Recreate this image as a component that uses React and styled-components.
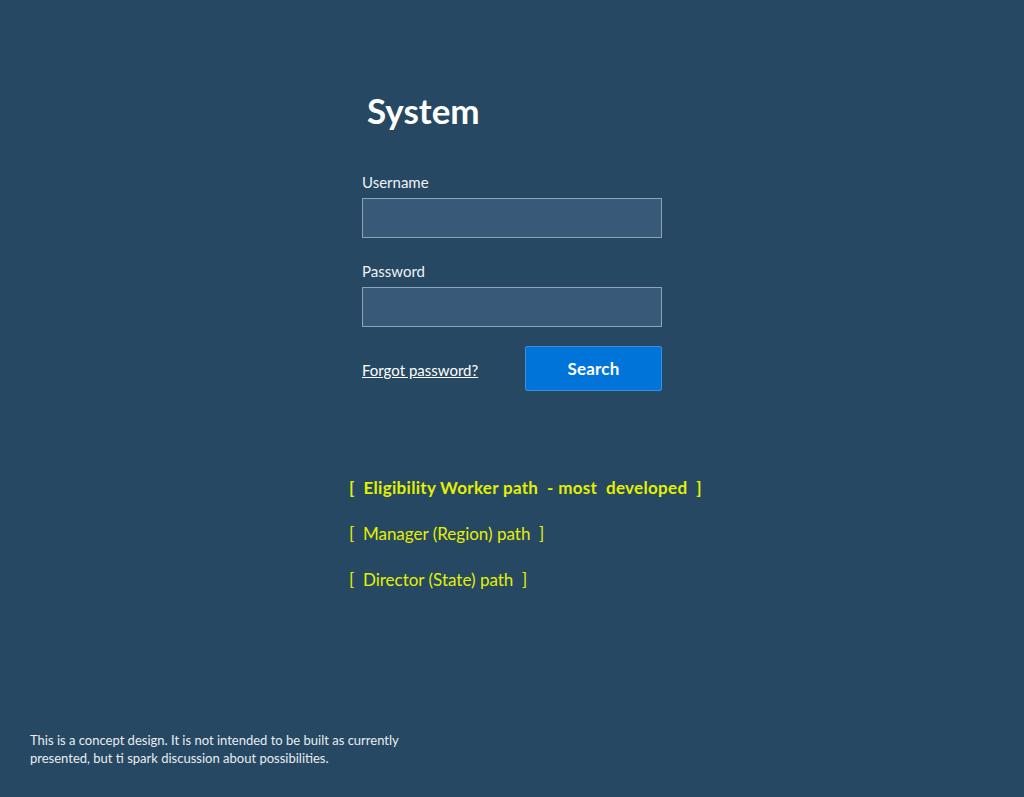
import React from "react";
import styled, { createGlobalStyle } from "styled-components";

const GlobalStyle = createGlobalStyle`
  html, body {
    margin: 0;
    padding: 0;
    background: #264863;
    font-family: "Lato", "Open Sans", sans-serif;
  }
`;

const Page = styled.div`
  width: 1024px;
  height: 797px;
  background: #264863;
  display: flex;
  flex-direction: column;
  box-sizing: border-box;
  padding-top: 88px;
`;

const Column = styled.div`
  width: 326px;
  margin: 0 auto;
  display: flex;
  flex-direction: column;
`;

const Form = styled.form`
  width: 300px;
  padding-left: 13px;
  display: flex;
  flex-direction: column;
`;

const Title = styled.h1`
  margin: 0 0 0 5px;
  color: #fff;
  font-size: 35px;
  font-weight: 700;
  line-height: 44px;
`;

const Label = styled.label`
  color: #eef2f6;
  font-size: 15px;
  line-height: 20px;
  margin-top: ${(p) => p.$top}px;
  margin-bottom: 6px;
`;

const Input = styled.input`
  box-sizing: border-box;
  width: 300px;
  height: 40px;
  background: #385a78;
  border: 1px solid #8ea3b8;
  color: #fff;
  outline: none;
  padding: 0 10px;
`;

const Actions = styled.div`
  display: flex;
  align-items: center;
  justify-content: space-between;
  margin-top: 19px;
`;

const Forgot = styled.a`
  color: #fff;
  font-size: 15px;
  text-decoration: underline;
  margin-top: 3px;
`;

const Button = styled.button`
  width: 137px;
  height: 45px;
  background: #0074d9;
  border: 1px solid #3b8fe0;
  border-radius: 2px;
  color: #fff;
  font-family: inherit;
  font-size: 17px;
  font-weight: 700;
  letter-spacing: 0.2px;
  padding-bottom: 2px;
`;

const Paths = styled.div`
  margin-top: 84px;
  display: flex;
  flex-direction: column;
  gap: 21px;
`;

const PathLink = styled.a`
  color: #e4f000;
  font-size: 17px;
  line-height: 25px;
  font-weight: ${(p) => (p.$bold ? 700 : 400)};
  letter-spacing: ${(p) => (p.$bold ? "0.3px" : "0")};
  white-space: pre;
  text-decoration: none;
`;

const Footer = styled.p`
  margin: auto 0 30px 30px;
  color: #e8edf2;
  font-size: 13px;
  line-height: 18px;
  width: 400px;
`;

export default function App() {
  return (
    <Page>
      <GlobalStyle />
      <Column>
        <Form onSubmit={(e) => e.preventDefault()}>
          <Title>System</Title>
          <Label $top={40}>Username</Label>
          <Input type="text" />
          <Label $top={23}>Password</Label>
          <Input type="password" />
          <Actions>
            <Forgot href="#">Forgot password?</Forgot>
            <Button type="submit">Search</Button>
          </Actions>
        </Form>
        <Paths>
          <PathLink href="#" $bold>{"[  Eligibility Worker path  - most  developed  ]"}</PathLink>
          <PathLink href="#">{"[  Manager (Region) path  ]"}</PathLink>
          <PathLink href="#">{"[  Director (State) path  ]"}</PathLink>
        </Paths>
      </Column>
      <Footer>
        This is a concept design. It is not intended to be built as currently
        presented, but ti spark discussion about possibilities.
      </Footer>
    </Page>
  );
}
